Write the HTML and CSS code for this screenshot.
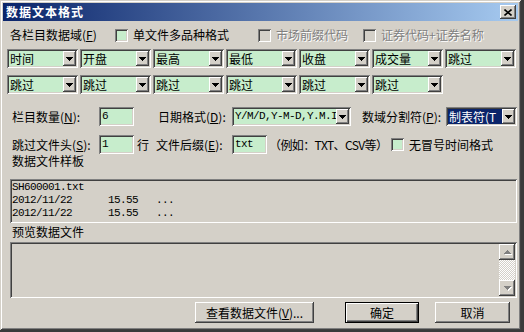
FILE: index.html
```html
<!DOCTYPE html>
<html lang="zh">

<head>
    <meta charset="UTF-8">
    <title>数据文本格式</title>
    <link rel="stylesheet" href="styles.css">
</head>

<body>
    <div class="win">
        <div class="title">
            <span class="titleText">数据文本格式</span>
            <span class="close">
                <svg width="8" height="7" viewBox="0 0 8 7"><path d="M0.5 0.5L7.5 6.5M7.5 0.5L0.5 6.5" stroke="#000" stroke-width="1.6" fill="none"/></svg>
            </span>
        </div>
        <div class="body">
            <div class="opts">
                <span class="optLabel">各栏目数据域(<u>F</u>)</span>
                <span class="chk g1"><span class="box"></span>单文件多品种格式</span>
                <span class="chk g2 off"><span class="box"></span>市场前缀代码</span>
                <span class="chk off"><span class="box"></span>证券代码+证券名称</span>
            </div>

            <!-- 栏目 첫째 줄 -->
            <div class="combos">
                <div class="combo"><span class="txt">时间</span><span class="arrow"><svg width="7" height="4"><path d="M0 0h7v1h-1v1h-1v1h-1v1h-1v-1h-1v-1h-1v-1h-1z"/></svg></span></div>
                <div class="combo"><span class="txt">开盘</span><span class="arrow"><svg width="7" height="4"><path d="M0 0h7v1h-1v1h-1v1h-1v1h-1v-1h-1v-1h-1v-1h-1z"/></svg></span></div>
                <div class="combo"><span class="txt">最高</span><span class="arrow"><svg width="7" height="4"><path d="M0 0h7v1h-1v1h-1v1h-1v1h-1v-1h-1v-1h-1v-1h-1z"/></svg></span></div>
                <div class="combo"><span class="txt">最低</span><span class="arrow"><svg width="7" height="4"><path d="M0 0h7v1h-1v1h-1v1h-1v1h-1v-1h-1v-1h-1v-1h-1z"/></svg></span></div>
                <div class="combo"><span class="txt">收盘</span><span class="arrow"><svg width="7" height="4"><path d="M0 0h7v1h-1v1h-1v1h-1v1h-1v-1h-1v-1h-1v-1h-1z"/></svg></span></div>
                <div class="combo"><span class="txt">成交量</span><span class="arrow"><svg width="7" height="4"><path d="M0 0h7v1h-1v1h-1v1h-1v1h-1v-1h-1v-1h-1v-1h-1z"/></svg></span></div>
                <div class="combo"><span class="txt">跳过</span><span class="arrow"><svg width="7" height="4"><path d="M0 0h7v1h-1v1h-1v1h-1v1h-1v-1h-1v-1h-1v-1h-1z"/></svg></span></div>
            </div>

            <!-- 栏目 둘째 줄 -->
            <div class="combos second">
                <div class="combo"><span class="txt">跳过</span><span class="arrow"><svg width="7" height="4"><path d="M0 0h7v1h-1v1h-1v1h-1v1h-1v-1h-1v-1h-1v-1h-1z"/></svg></span></div>
                <div class="combo"><span class="txt">跳过</span><span class="arrow"><svg width="7" height="4"><path d="M0 0h7v1h-1v1h-1v1h-1v1h-1v-1h-1v-1h-1v-1h-1z"/></svg></span></div>
                <div class="combo"><span class="txt">跳过</span><span class="arrow"><svg width="7" height="4"><path d="M0 0h7v1h-1v1h-1v1h-1v1h-1v-1h-1v-1h-1v-1h-1z"/></svg></span></div>
                <div class="combo"><span class="txt">跳过</span><span class="arrow"><svg width="7" height="4"><path d="M0 0h7v1h-1v1h-1v1h-1v1h-1v-1h-1v-1h-1v-1h-1z"/></svg></span></div>
                <div class="combo"><span class="txt">跳过</span><span class="arrow"><svg width="7" height="4"><path d="M0 0h7v1h-1v1h-1v1h-1v1h-1v-1h-1v-1h-1v-1h-1z"/></svg></span></div>
                <div class="combo"><span class="txt">跳过</span><span class="arrow"><svg width="7" height="4"><path d="M0 0h7v1h-1v1h-1v1h-1v1h-1v-1h-1v-1h-1v-1h-1z"/></svg></span></div>
            </div>

            <div class="fieldRow r4">
                <span class="fLabel w1">栏目数量(<u>N</u>):</span>
                <span class="input mono">6</span>
                <span class="fLabel w2">日期格式(<u>D</u>):</span>
                <div class="combo dateCombo"><span class="txt mono">Y/M/D,Y-M-D,Y.M.I</span><span class="arrow"><svg width="7" height="4"><path d="M0 0h7v1h-1v1h-1v1h-1v1h-1v-1h-1v-1h-1v-1h-1z"/></svg></span></div>
                <span class="fLabel w3">数域分割符(<u>P</u>):</span>
                <div class="combo"><span class="txt sel">制表符(T</span><span class="arrow"><svg width="7" height="4"><path d="M0 0h7v1h-1v1h-1v1h-1v1h-1v-1h-1v-1h-1v-1h-1z"/></svg></span></div>
            </div>

            <div class="fieldRow r5">
                <span class="fLabel w1">跳过文件头(<u>S</u>):</span>
                <span class="input mono">1</span>
                <span class="unit">行</span>
                <span class="fLabel w4">文件后缀(<u>E</u>):</span>
                <span class="input mono">txt</span>
                <span class="hint">（例如：TXT、CSV等）</span>
                <span class="chk"><span class="box"></span>无冒号时间格式</span>
            </div>

            <div class="cap">数据文件样板</div>
            <div class="sample mono">SH600001.txt
2012/11/22      15.55   ...
2012/11/22      15.55   ...</div>

            <div class="cap cap2">预览数据文件</div>
            <div class="preview">
                <div class="sbar">
                    <span class="sbBtn"><svg width="7" height="5"><path d="M3 0h1v1h1v1h1v1h1v1h-7v-1h1v-1h1v-1h1z" fill="#808080"/></svg></span>
                    <span class="sbTrack"></span>
                    <span class="sbBtn"><svg width="7" height="5"><path d="M0 0h7v1h-1v1h-1v1h-1v1h-1v-1h-1v-1h-1v-1h-1z" fill="#808080"/></svg></span>
                </div>
            </div>

            <div class="actions">
                <span class="button b1">查看数据文件(<u>V</u>)...</span>
                <span class="button b2 default">确定</span>
                <span class="button b3">取消</span>
            </div>
        </div>
    </div>
</body>

</html>
```

FILE: styles.css
```css
* {
    box-sizing: border-box;
}

body {
    margin: 0;
    background: #3a3a3a;
    font: 12px/14px "Noto Sans CJK SC", sans-serif;
    color: #000;
}

.win {
    width: 521px;
    height: 330px;
    padding: 3px;
    background: #d4d0c8;
    box-shadow: inset 1px 1px #d4d0c8, inset -1px -1px #404040, inset 2px 2px #fff, inset -2px -2px #808080;
}

.title {
    height: 18px;
    display: flex;
    align-items: center;
    justify-content: space-between;
    padding: 0 2px 0 3px;
    background: linear-gradient(to right, #0a246a, #a6caf0);
    color: #fff;
    font-weight: bold;
}

.titleText {
    letter-spacing: 1px;
}

.close {
    width: 16px;
    height: 14px;
    display: flex;
    align-items: center;
    justify-content: center;
    background: #d4d0c8;
    box-shadow: inset -1px -1px #404040, inset 1px 1px #fff, inset -2px -2px #808080;
}

.close svg {
    display: block;
}

.body {
    padding-left: 4px;
}

/* 첫 줄 옵션 */
.opts {
    display: flex;
    align-items: center;
    height: 20px;
    margin-top: 4px;
}

.optLabel {
    width: 108px;
    padding-left: 3px;
}

.chk {
    display: flex;
    align-items: center;
    gap: 5px;
}

.g1 {
    width: 143px;
}

.g2 {
    width: 105px;
}

.box {
    width: 13px;
    height: 13px;
    background: #c7edcc;
    box-shadow: inset 1px 1px #808080, inset -1px -1px #fff, inset 2px 2px #404040, inset -2px -2px #d4d0c8;
}

.off {
    color: #808080;
    text-shadow: 1px 1px #fff;
}

.off .box {
    background: #d4d0c8;
}

/* 콤보박스 */
.combos {
    display: flex;
    gap: 2px;
    margin-top: 4px;
}

.second {
    margin-top: 7px;
}

.combo {
    width: 71px;
    height: 19px;
    display: flex;
    padding: 2px;
    background: #c7edcc;
    box-shadow: inset 1px 1px #808080, inset -1px -1px #fff, inset 2px 2px #404040, inset -2px -2px #d4d0c8;
}

.combo .txt {
    flex: 1;
    padding-left: 1px;
    line-height: 15px;
    overflow: hidden;
    white-space: nowrap;
}

.combo .sel {
    background: #0a246a;
    color: #fff;
}

.arrow {
    width: 13px;
    height: 15px;
    display: flex;
    align-items: center;
    justify-content: center;
    background: #d4d0c8;
    box-shadow: inset -1px -1px #404040, inset 1px 1px #fff, inset -2px -2px #808080;
}

.arrow svg,
.sbBtn svg {
    display: block;
}

/* 입력 줄 */
.fieldRow {
    display: flex;
    align-items: center;
    height: 19px;
}

.r4 {
    margin-top: 13px;
}

.r5 {
    margin-top: 9px;
}

.fLabel {
    white-space: nowrap;
}

.w1 {
    width: 92px;
    padding-left: 5px;
}

.w2 {
    width: 98px;
    padding-left: 24px;
}

.w3 {
    width: 95px;
    padding-left: 11px;
}

.w4 {
    width: 83px;
    padding-left: 7px;
}

.dateCombo {
    width: 119px;
}

.input {
    width: 35px;
    height: 19px;
    padding: 2px 3px;
    line-height: 15px;
    background: #c7edcc;
    box-shadow: inset 1px 1px #808080, inset -1px -1px #fff, inset 2px 2px #404040, inset -2px -2px #d4d0c8;
}

.unit {
    margin-left: 3px;
}

.hint {
    width: 122px;
    margin-left: 2px;
    letter-spacing: -0.6px;
    white-space: nowrap;
}

.mono {
    font-family: "Liberation Mono", monospace;
    font-size: 11px;
    letter-spacing: -0.6px;
}

/* 파일 샘플 */
.cap {
    height: 14px;
    padding-left: 5px;
}

.sample {
    width: 507px;
    height: 44px;
    margin: 11px 0 0 3px;
    padding: 2px 0 0 2px;
    line-height: 13px;
    white-space: pre;
    box-shadow: inset 1px 1px #808080, inset -1px -1px #fff, inset 2px 2px #404040, inset -2px -2px #d4d0c8;
}

.cap2 {
    margin-top: 2px;
}

.preview {
    width: 507px;
    height: 56px;
    margin: 3px 0 0 3px;
    padding: 2px;
    display: flex;
    justify-content: flex-end;
    box-shadow: inset 1px 1px #808080, inset -1px -1px #fff, inset 2px 2px #404040, inset -2px -2px #d4d0c8;
}

.sbar {
    width: 16px;
    display: flex;
    flex-direction: column;
}

.sbBtn {
    height: 16px;
    display: flex;
    align-items: center;
    justify-content: center;
    background: #d4d0c8;
    box-shadow: inset -1px -1px #404040, inset 1px 1px #fff, inset -2px -2px #808080;
}

.sbBtn svg {
    filter: drop-shadow(1px 1px 0 #fff);
}

.sbTrack {
    flex: 1;
    background: conic-gradient(#fff 25%, #d4d0c8 0 50%, #fff 0 75%, #d4d0c8 0);
    background-size: 2px 2px;
}

/* 버튼 */
.actions {
    display: flex;
    height: 21px;
    margin-top: 4px;
    padding-left: 188px;
}

.button {
    height: 21px;
    line-height: 21px;
    text-align: center;
    background: #d4d0c8;
    box-shadow: inset -1px -1px #404040, inset 1px 1px #fff, inset -2px -2px #808080;
}

.b1 {
    width: 119px;
}

.b2 {
    width: 74px;
    margin-left: 31px;
}

.b3 {
    width: 75px;
    margin-left: 16px;
}

.default {
    box-shadow: inset 1px 1px #000, inset -1px -1px #000, inset 2px 2px #fff, inset -2px -2px #404040, inset -3px -3px #808080;
}
```
